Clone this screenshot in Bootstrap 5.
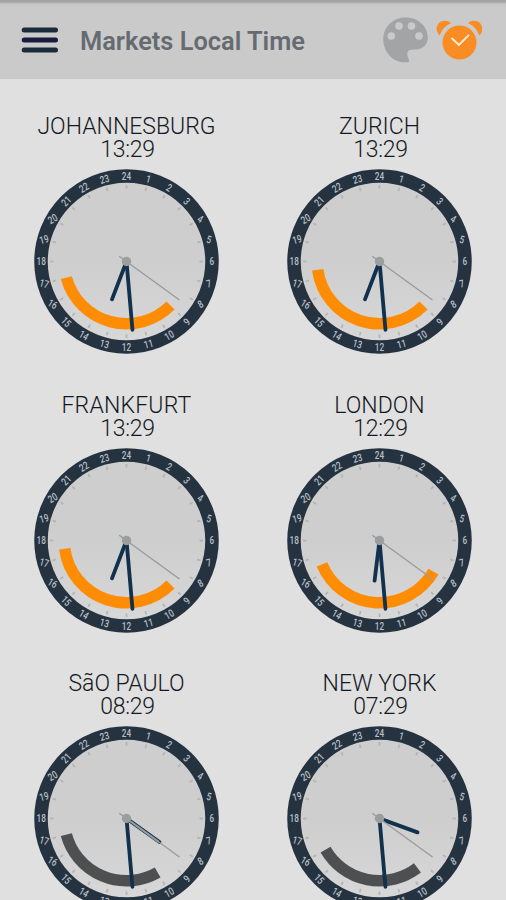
<!DOCTYPE html>
<html lang="en">
<head>
<meta charset="utf-8">
<meta name="viewport" content="width=device-width, initial-scale=1">
<title>Markets Local Time</title>
<link href="https://cdn.jsdelivr.net/npm/bootstrap@5.3.0/dist/css/bootstrap.min.css" rel="stylesheet">
<style>
  body { background: #e0e0e0; font-family: Roboto, "Liberation Sans", sans-serif; color: #14181f; height: 900px; overflow: hidden; }
  .topbar { height: 79px; background: linear-gradient(#a2a2a2 0, #a6a6a6 2px, #c6c6c6 4px, #cacaca 8px); padding: 0 24px 0 21px; }
  .topbar h1 { font-size: 25.4px; font-weight: 600; color: #666b71; line-height: 30px; margin: 3px 0 0 21px; }
  .menu-btn { width: 38px; height: 28px; }
  .clock-cell { height: 278.5px; padding-top: 36px; }
  .city, .local-time { font-size: 23px; line-height: 23px; white-space: nowrap; }
  .city { font-weight: 350; }
  .local-time { font-weight: 350; letter-spacing: -.3px; padding-left: 2px; }
  .clock-face { width: 185px; height: 185px; margin-top: 8px; }
  .clock-face text { font: 500 10.5px Roboto, "Liberation Sans", sans-serif; fill: #b9bfc5; text-anchor: middle; }
</style>
<script src="https://cdn.jsdelivr.net/npm/bootstrap@5.3.0/dist/js/bootstrap.bundle.min.js"></script>
</head>
<body>
<header class="topbar d-flex align-items-center">
  <button class="menu-btn btn p-0 border-0 d-flex" aria-label="Menu">
    <svg width="38" height="28" viewBox="0 0 38 28"><g stroke="#1c2b3b" stroke-width="5" stroke-linecap="round"><path d="M3.2 4H34.5M3.2 24H34.5"/><path stroke="#1d1b3b" d="M3.2 14H34.5"/></g></svg>
  </button>
  <h1 class="me-auto text-nowrap">Markets Local Time</h1>
  <svg width="46" height="48" viewBox="0 0 46 48" aria-label="Theme">
    <path fill="#a3a4a5" d="M23.500 1.500C11 1.500 1.300 11 1.300 23.500C1.300 36 11 46.300 22 46.300C24.500 46.300 26.500 46 27 45.700C27.500 43 24.500 40.500 25.500 36.500C26.500 33.500 29.500 33.700 34 33.500C41 33.200 45.800 28.500 45.800 21.500C45.800 10 36 1.500 23.500 1.500Z"/>
    <g fill="#cacaca"><circle cx="9.300" cy="20" r="3.800"/><circle cx="17" cy="10" r="3.800"/><circle cx="29.500" cy="10" r="3.800"/><circle cx="37" cy="20" r="3.800"/></g>
  </svg>
  <svg class="ms-2" width="46" height="48" viewBox="0 0 46 48" aria-label="Alarm">
    <g fill="#f98d23"><circle cx="23.500" cy="26.500" r="17"/>
    <path id="bell" d="M3.600 19.500C-1.500 14.500 0.500 7 6 5.200C9.300 4.100 12.800 4.700 15 7.200C9.500 9.300 6 13.500 3.600 19.500Z"/>
    <use href="#bell" transform="translate(47 0) scale(-1 1)"/></g>
    <path d="M15.500 22L22.900 28.900L33 18.900" fill="none" stroke="#fff0d8" stroke-width="2"/>
  </svg>
</header>
<main class="container-fluid p-0">
  <div class="row g-0" id="clocks"></div>
</main>
<script>
  // s and e: market opening span in 24h-dial hours; h: hour-hand angle
  const markets = [
    { city: 'JOHANNESBURG', time: '13:29', s: 9, e: 17, h: 201, open: true, ls: 0 },
    { city: 'ZURICH', time: '13:29', s: 9, e: 17.5, h: 201, open: true, ls: 0 },
    { city: 'FRANKFURT', time: '13:29', s: 9, e: 17.5, h: 201, open: true, ls: 0.2 },
    { city: 'LONDON', time: '12:29', s: 8, e: 16.5, h: 187, open: true, ls: 0 },
    { city: 'SãO PAULO', time: '08:29', s: 10, e: 17, h: 125.5, open: false, ls: 0 },
    { city: 'NEW YORK', time: '07:29', s: 9.5, e: 16, h: 110, open: false, ls: 0 }
  ];
  const pt = (a, r) => [r * Math.sin(a * Math.PI / 180), -r * Math.cos(a * Math.PI / 180)].map(v => v.toFixed(2)).join(' ');
  const line = (a, r1, r2, c, w, cap = 'butt') => `<path d="M${pt(a, r1)}L${pt(a, r2)}" stroke="${c}" stroke-width="${w}" stroke-linecap="${cap}"/>`;
  let dial = '';
  for (let n = 1; n <= 24; n++) {
    // numerals tilt with the ring but never by more than 45 degrees
    const a = n * 15, m = a % 90, base = Math.floor(a / 90);
    let t = m <= 45 ? m : 90 - m;
    if (base === 1 || base === 3) t = -t;
    const [x, y] = pt(a, 85.3).split(' ');
    dial += line(a, 73, 76.5, '#b2b4b6', 1.8) + `<text transform="translate(${x} ${y}) rotate(${t}) scale(.78 1)" y="3.7">${n}</text>`;
  }
  document.getElementById('clocks').innerHTML = markets.map(m => `
    <section class="col-6 clock-cell d-flex flex-column align-items-center">
      <div class="city" style="letter-spacing:${m.ls}px">${m.city}</div>
      <div class="local-time">${m.time}</div>
      <svg class="clock-face flex-shrink-0" viewBox="-92.5 -92.5 185 185">
        <defs><linearGradient id="shade" x1="0" y1="0" x2="0" y2="1"><stop offset="0" stop-color="#cecece"/><stop offset=".5" stop-color="#cecece"/><stop offset="1" stop-color="#d8d8d8"/></linearGradient></defs>
        <circle r="85.5" fill="url(#shade)" stroke="#253341" stroke-width="13.500"/>
        ${dial}
        <path d="M${pt(m.e * 15, 62.3)}A62.3 62.3 0 0 0 ${pt(m.s * 15, 62.3)}" fill="none" stroke="${m.open ? '#ff8c05' : '#4d4f50'}" stroke-width="11.500"/>
        ${line(m.h, 4, 40.5, '#12314e', 3.8, 'round')}
        ${line(175, 4, 68.5, '#12314e', 3.8, 'round')}
        ${m.time === '08:29' ? line(126, 5, 40, '#888d91', 2.2) : ''}
        ${line(126, -9, 65.5, '#999b9d', 1.4)}
        <circle r="4.700" fill="#9b9d9e"/>
      </svg>
    </section>`).join('');
</script>
</body>
</html>
